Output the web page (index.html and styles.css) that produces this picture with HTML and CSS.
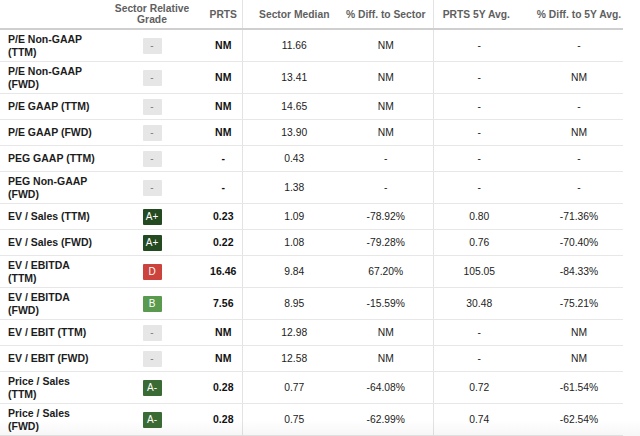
FILE: index.html
```html
<!DOCTYPE html>
<html>
<head>
<meta charset="utf-8">
<link rel="stylesheet" href="styles.css">
</head>
<body>
<table class="grid">
  <colgroup>
    <col class="c-label"><col class="c-grade"><col class="c-prts"><col class="c-sm"><col class="c-ds"><col class="c-5y"><col class="c-d5">
  </colgroup>
  <thead>
    <tr>
      <th></th>
      <th>Sector Relative<br>Grade</th>
      <th class="prts">PRTS</th>
      <th>Sector Median</th>
      <th class="ds">% Diff. to Sector</th>
      <th class="y5">PRTS 5Y Avg.</th>
      <th>% Diff. to 5Y Avg.</th>
    </tr>
  </thead>
  <tbody>
    <tr class="dbl"><td class="label">P/E Non-GAAP<br>(TTM)</td><td><span class="badge none">-</span></td><td class="prts">NM</td><td>11.66</td><td class="ds">NM</td><td class="y5">-</td><td>-</td></tr>
    <tr class="dbl"><td class="label">P/E Non-GAAP<br>(FWD)</td><td><span class="badge none">-</span></td><td class="prts">NM</td><td>13.41</td><td class="ds">NM</td><td class="y5">-</td><td>NM</td></tr>
    <tr class="sgl"><td class="label">P/E GAAP (TTM)</td><td><span class="badge none">-</span></td><td class="prts">NM</td><td>14.65</td><td class="ds">NM</td><td class="y5">-</td><td>-</td></tr>
    <tr class="sgl"><td class="label">P/E GAAP (FWD)</td><td><span class="badge none">-</span></td><td class="prts">NM</td><td>13.90</td><td class="ds">NM</td><td class="y5">-</td><td>NM</td></tr>
    <tr class="sgl"><td class="label">PEG GAAP (TTM)</td><td><span class="badge none">-</span></td><td class="prts">-</td><td>0.43</td><td class="ds">-</td><td class="y5">-</td><td>-</td></tr>
    <tr class="dbl"><td class="label">PEG Non-GAAP<br>(FWD)</td><td><span class="badge none">-</span></td><td class="prts">-</td><td>1.38</td><td class="ds">-</td><td class="y5">-</td><td>-</td></tr>
    <tr class="sgl"><td class="label">EV / Sales (TTM)</td><td><span class="badge aplus">A+</span></td><td class="prts">0.23</td><td>1.09</td><td class="ds">-78.92%</td><td class="y5">0.80</td><td>-71.36%</td></tr>
    <tr class="sgl"><td class="label">EV / Sales (FWD)</td><td><span class="badge aplus">A+</span></td><td class="prts">0.22</td><td>1.08</td><td class="ds">-79.28%</td><td class="y5">0.76</td><td>-70.40%</td></tr>
    <tr class="dbl"><td class="label">EV / EBITDA<br>(TTM)</td><td><span class="badge d">D</span></td><td class="prts">16.46</td><td>9.84</td><td class="ds">67.20%</td><td class="y5">105.05</td><td>-84.33%</td></tr>
    <tr class="dbl"><td class="label">EV / EBITDA<br>(FWD)</td><td><span class="badge b">B</span></td><td class="prts">7.56</td><td>8.95</td><td class="ds">-15.59%</td><td class="y5">30.48</td><td>-75.21%</td></tr>
    <tr class="sgl"><td class="label">EV / EBIT (TTM)</td><td><span class="badge none">-</span></td><td class="prts">NM</td><td>12.98</td><td class="ds">NM</td><td class="y5">-</td><td>NM</td></tr>
    <tr class="sgl"><td class="label">EV / EBIT (FWD)</td><td><span class="badge none">-</span></td><td class="prts">NM</td><td>12.58</td><td class="ds">NM</td><td class="y5">-</td><td>NM</td></tr>
    <tr class="dbl"><td class="label">Price / Sales<br>(TTM)</td><td><span class="badge aminus">A-</span></td><td class="prts">0.28</td><td>0.77</td><td class="ds">-64.08%</td><td class="y5">0.72</td><td>-61.54%</td></tr>
    <tr class="dbl"><td class="label">Price / Sales<br>(FWD)</td><td><span class="badge aminus">A-</span></td><td class="prts">0.28</td><td>0.75</td><td class="ds">-62.99%</td><td class="y5">0.74</td><td>-62.54%</td></tr>
  </tbody>
</table>
</body>
</html>
```
FILE: styles.css
```css
html, body {
  margin: 0;
  padding: 0;
  background: #ffffff;
}
body {
  font-family: "Liberation Sans", Arial, sans-serif;
  color: #222222;
  width: 640px;
  height: 436px;
  overflow: hidden;
  position: relative;
}
body::after {
  content: "";
  position: absolute;
  left: 0;
  right: 0;
  bottom: 0;
  height: 16px;
  background: linear-gradient(rgba(0,0,0,0), rgba(0,0,0,0.035));
  pointer-events: none;
}
.grid {
  border-collapse: collapse;
  table-layout: fixed;
  width: 623px;
}
.c-label { width: 104px; }
.c-grade { width: 96px; }
.c-prts { width: 42px; }
.c-sm { width: 104px; }
.c-ds { width: 87px; }
.c-5y { width: 102px; }
.c-d5 { width: 88px; }

.grid th {
  height: 28px;
  padding: 0;
  font-size: 10.3px;
  line-height: 11px;
  font-weight: bold;
  color: #5f5f5f;
  text-align: center;
  vertical-align: middle;
  white-space: nowrap;
  border-bottom: 2px solid #cfcfcf;
}
.grid td {
  padding: 0;
  font-size: 10.3px;
  line-height: 13px;
  text-align: center;
  vertical-align: middle;
  color: #222222;
  border-bottom: 1px solid #e7e7e7;
}
.grid tr.sgl td { height: 25px; }
.grid tr.dbl td { height: 31px; }

.grid td.label {
  text-align: left;
  padding-left: 8px;
  font-size: 10.5px;
  font-weight: bold;
  color: #1c1c1c;
}
.grid .prts {
  padding-left: 5px;
  border-right: 1px solid #e3e3e3;
}
.grid td.prts {
  font-weight: bold;
  color: #111111;
  font-size: 10.5px;
}
.grid .ds {
  padding-right: 7px;
  border-right: 1px solid #e3e3e3;
}
.grid td.y5 { padding-right: 10px; }
.grid th.y5 { padding-right: 16px; }

.badge {
  display: inline-block;
  width: 19px;
  height: 16px;
  line-height: 16px;
  font-size: 10px;
  text-align: center;
  color: #ffffff;
  border-radius: 1px;
  vertical-align: middle;
}
.badge.none {
  background: #e6e6e6;
  color: #7a7a7a;
}
.badge.aplus { background: #244a22; }
.badge.aminus { background: #3b6b35; }
.badge.b { background: #5a9a4e; }
.badge.d { background: #cc423c; }
```
